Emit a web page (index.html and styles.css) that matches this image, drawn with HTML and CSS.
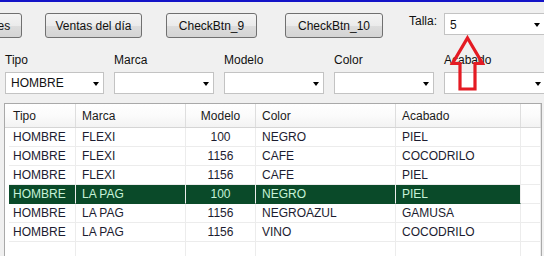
FILE: index.html
```html
<!DOCTYPE html>
<html>
<head>
<meta charset="utf-8">
<link rel="stylesheet" href="styles.css">
</head>
<body>
<div class="topline"></div>
<div class="toolbar">
  <div class="btn btn-cut">Clientes</div>
  <div class="btn btn-ventas">Ventas del día</div>
  <div class="btn btn-9">CheckBtn_9</div>
  <div class="btn btn-10">CheckBtn_10</div>
  <span class="talla-label">Talla:</span>
  <div class="combo combo-talla"><span>5</span><i class="caret"></i></div>
</div>
<div class="filters">
  <div class="filter"><div class="flabel">Tipo</div><div class="combo"><span>HOMBRE</span><i class="caret"></i></div></div>
  <div class="filter"><div class="flabel">Marca</div><div class="combo"><span></span><i class="caret"></i></div></div>
  <div class="filter"><div class="flabel">Modelo</div><div class="combo"><span></span><i class="caret"></i></div></div>
  <div class="filter"><div class="flabel">Color</div><div class="combo"><span></span><i class="caret"></i></div></div>
  <div class="filter"><div class="flabel">Acabado</div><div class="combo combo-last"><span></span><i class="caret"></i></div></div>
</div>
<div class="table">
  <div class="thead">
    <div class="th first">Tipo</div>
    <div class="th">Marca</div>
    <div class="th center">Modelo</div>
    <div class="th">Color</div>
    <div class="th">Acabado</div>
    <div class="th filler"></div>
  </div>
  <div class="row">
    <div class="td first">HOMBRE</div><div class="td">FLEXI</div><div class="td center">100</div><div class="td">NEGRO</div><div class="td">PIEL</div><div class="td filler"></div>
  </div>
  <div class="row">
    <div class="td first">HOMBRE</div><div class="td">FLEXI</div><div class="td center">1156</div><div class="td">CAFE</div><div class="td">COCODRILO</div><div class="td filler"></div>
  </div>
  <div class="row">
    <div class="td first">HOMBRE</div><div class="td">FLEXI</div><div class="td center">1156</div><div class="td">CAFE</div><div class="td">PIEL</div><div class="td filler"></div>
  </div>
  <div class="row selected">
    <div class="td first">HOMBRE</div><div class="td">LA PAG</div><div class="td center">100</div><div class="td">NEGRO</div><div class="td">PIEL</div><div class="td filler"></div>
  </div>
  <div class="row">
    <div class="td first">HOMBRE</div><div class="td">LA PAG</div><div class="td center">1156</div><div class="td">NEGROAZUL</div><div class="td">GAMUSA</div><div class="td filler"></div>
  </div>
  <div class="row">
    <div class="td first">HOMBRE</div><div class="td">LA PAG</div><div class="td center">1156</div><div class="td">VINO</div><div class="td">COCODRILO</div><div class="td filler"></div>
  </div>
  <div class="row empty">
    <div class="td first"></div><div class="td"></div><div class="td"></div><div class="td"></div><div class="td"></div><div class="td filler"></div>
  </div>
</div>
<svg class="arrow" width="40" height="60" viewBox="448 34 40 60">
  <polygon points="467.5,38 482.5,63.5 475,63.5 475,89 460,89 460,63.5 452.5,63.5" fill="none" stroke="#e41b23" stroke-width="3.2" stroke-linejoin="miter"/>
</svg>
</body>
</html>
```

FILE: styles.css
```css
html, body {
  margin: 0;
  padding: 0;
}
body {
  width: 544px;
  height: 256px;
  overflow: hidden;
  position: relative;
  background: #f0f0f0;
  font-family: "Liberation Sans", Arial, sans-serif;
  font-size: 12px;
  color: #000;
}
.topline {
  height: 2px;
  background: #1414c8;
}
.toolbar {
  display: flex;
  align-items: flex-start;
  margin-top: 11px;
  height: 25px;
  white-space: nowrap;
}
.btn {
  box-sizing: border-box;
  height: 25px;
  border: 1px solid #707070;
  border-radius: 3px;
  background: linear-gradient(#f4f4f4, #ebebeb 50%, #dddddd 51%, #d4d4d4);
  display: flex;
  align-items: center;
  justify-content: center;
  flex: none;
  color: #111;
}
.btn-cut { width: 67px; margin-left: -45px; }
.btn-ventas { width: 97px; margin-left: 23px; }
.btn-9 { width: 91px; margin-left: 24px; }
.btn-10 { width: 98px; margin-left: 28px; }
.talla-label {
  margin-left: 26px;
  line-height: 14px;
  margin-top: 1px;
  width: 35px;
  flex: none;
  color: #111;
}
.combo {
  box-sizing: border-box;
  height: 22px;
  background: #fff;
  border: 1px solid #c3c3c3;
  display: flex;
  align-items: center;
  justify-content: space-between;
  padding: 0 4px 0 5px;
  color: #111;
}
.combo-talla {
  width: 102px;
  flex: none;
  padding-right: 5px;
}
.combo-talla span { margin-top: 1px; }
.caret {
  width: 0;
  height: 0;
  border-left: 3.5px solid transparent;
  border-right: 3.5px solid transparent;
  border-top: 4px solid #000;
  margin-top: 1px;
}
.filters {
  display: grid;
  grid-template-columns: 99px 100px 100px 100px 102px;
  column-gap: 10px;
  padding-left: 5px;
  margin-top: 15px;
}
.flabel {
  line-height: 14px;
  height: 14px;
  margin-bottom: 5px;
  color: #111;
}
.table {
  margin-top: 9px;
  margin-left: 4px;
  width: 538px;
  height: 153px;
  overflow: hidden;
  box-sizing: border-box;
  border: 1px solid #a9a9a9;
  border-bottom: none;
  background: #fff;
}
.thead, .row {
  display: grid;
  grid-template-columns: 67px 110px 70px 140px 125px 20px;
  padding-left: 4px;
}
.thead {
  height: 23px;
  background: linear-gradient(#ffffff, #fbfbfb 50%, #f3f3f3);
  border-bottom: 1px solid #d5d5d5;
  color: #1a1a1a;
}
.th {
  display: flex;
  align-items: center;
  padding-left: 6px;
  border-right: 1px solid #dedede;
  white-space: nowrap;
}
.th.first { padding-left: 4px; }
.th.center, .td.center { justify-content: center; padding-left: 0; }
.row {
  height: 19px;
  color: #1c1c30;
}
.td {
  display: flex;
  align-items: center;
  padding-left: 6px;
  border-right: 1px solid #ececec;
  border-bottom: 1px solid #ececec;
  white-space: nowrap;
}
.td.first { padding-left: 4px; }
.row.selected .td {
  background: #0a4a29;
  color: #c6f2d8;
  border-bottom-color: #0a4a29;
}
.row.selected .td.filler {
  background: #fff;
  border-bottom-color: #ececec;
}
.row.empty { height: 30px; }
.row.empty .td { border-bottom: none; }
.arrow {
  position: absolute;
  left: 448px;
  top: 34px;
}
```
